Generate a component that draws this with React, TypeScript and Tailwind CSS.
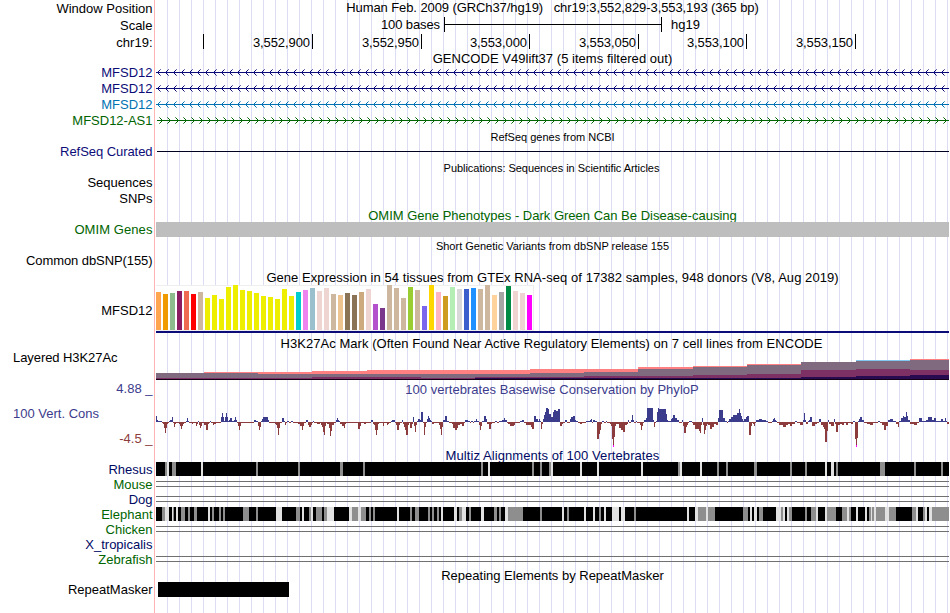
import type { ReactNode } from "react";

type Span = [number, number];

const TRACK_X = 156;

const gtex: [number, string][] = [
  [38, "#ffa54f"], [36, "#ee9a00"], [37, "#8fbc8f"], [39, "#8b1c62"], [39, "#ee6a50"], [36, "#ff0000"], [38, "#cdb79e"],
  [32, "#eeee00"], [35, "#eeee00"], [31, "#eeee00"], [43, "#eeee00"], [45, "#eeee00"], [40, "#eeee00"], [39, "#eeee00"],
  [37, "#eeee00"], [34, "#eeee00"], [33, "#eeee00"], [31, "#eeee00"], [41, "#eeee00"], [34, "#eeee00"], [38, "#00cdcd"],
  [40, "#ee82ee"], [42, "#9ac0cd"], [39, "#eed5d2"], [42, "#eed5d2"], [36, "#cdb79e"], [35, "#eec591"], [37, "#8b7355"],
  [35, "#8b7355"], [38, "#cdaa7d"], [41, "#eed5d2"], [26, "#b452cd"], [22, "#7a378b"], [45, "#cdb79e"], [42, "#cdb79e"],
  [32, "#cdb79e"], [43, "#9acd32"], [40, "#cdb79e"], [24, "#7a67ee"], [45, "#ffd700"], [38, "#ffb6c1"], [34, "#cd9b1d"],
  [43, "#b4eeb4"], [41, "#d9d9d9"], [41, "#3a5fcd"], [42, "#1e90ff"], [41, "#cdb79e"], [45, "#cdb79e"], [35, "#ffd39b"],
  [38, "#a6a6a6"], [44, "#008b45"], [39, "#eed5d2"], [37, "#eed5d2"], [35, "#ff00ff"],
];

// Segment start, then the top edge of each layer: outline, grey, purple, navy.
const h3k27: [number, number, string, number, number, number][] = [
  [156, 373, "#ff8080", 373, 378, 379],
  [204, 372, "#ff8080", 373, 378, 379],
  [258, 372, "#ff8080", 374, 378, 379],
  [312, 371, "#ff8080", 374, 377, 379],
  [367, 370, "#ff8080", 374, 377, 379],
  [421, 370, "#ff8080", 374, 378, 379],
  [475, 370, "#ff8080", 374, 377, 378],
  [530, 369, "#ff8080", 373, 377, 378],
  [584, 369, "#ff8080", 372, 376, 378],
  [638, 367, "#ff8080", 369, 376, 378],
  [693, 366, "#ff8080", 367, 375, 378],
  [747, 364, "#ff8080", 365, 374, 378],
  [801, 362, "#ff8080", 362, 370, 377],
  [856, 360, "#80c8f0", 361, 369, 376],
  [910, 359, "#ff8080", 360, 370, 375],
];

// Signed steps: each height holds from its x to the next one.
const phylop: Span[] = [
  [156, 6], [157, 2], [158, 1], [162, -1], [163, -2], [164, -6], [165, -11], [166, -6], [167, -2], [168, -1], [169, 1], [170, 2], [172, 5], [173, -1], [174, -5], [175, -2], [176, -1], [179, -2], [180, -4], [181, -7], [182, -4], [183, -2], [184, -1], [186, 1], [187, 4], [188, 1], [189, -1], [192, -2], [193, -1], [196, -4], [197, -2], [198, 1], [199, -3], [200, -6], [201, -4], [202, -1], [204, -3], [206, -8], [208, -2], [209, -1], [210, 1], [211, -1], [213, -3], [214, -2], [216, -1], [221, 5], [222, 9], [223, 5], [224, 1], [225, 5], [226, 9], [227, 5], [228, 1], [229, 2], [230, 4], [232, 1], [234, 2], [235, 5], [236, 2], [237, -1], [238, -4], [239, -8], [240, -4], [241, -1], [254, 2], [256, 1], [258, -4], [259, -8], [260, -5], [261, 1], [262, 3], [263, 5], [268, 2], [269, -1], [275, -2], [276, -3], [277, -6], [278, -13], [279, -6], [280, -1], [282, 4], [284, 1], [285, -3], [286, -1], [287, 1], [289, -1], [291, 1], [293, -1], [298, -2], [300, -4], [302, -8], [303, -4], [304, -1], [306, 2], [308, -3], [309, -5], [311, -3], [312, -1], [313, 1], [314, -1], [317, -2], [320, -1], [321, -3], [322, -5], [323, -10], [324, -13], [325, -4], [326, -1], [327, -2], [329, -6], [330, -14], [331, -9], [332, -3], [334, -1], [336, 2], [337, 4], [338, 2], [339, 1], [340, -2], [342, -4], [344, -6], [345, -2], [346, -1], [358, -7], [360, -4], [361, -1], [364, -2], [366, -1], [371, 2], [373, -2], [374, -3], [375, -8], [376, -13], [377, -8], [378, -2], [379, -1], [383, -4], [384, -1], [387, -3], [388, -2], [389, -1], [391, 1], [392, 2], [395, -1], [396, -3], [397, -8], [399, -3], [400, -1], [402, 2], [403, -2], [404, -5], [405, -8], [406, -13], [408, -3], [409, -1], [410, -6], [412, -2], [413, 5], [414, -4], [415, -10], [416, -3], [417, 1], [418, 3], [420, 2], [421, 10], [423, -1], [424, -13], [425, -5], [426, -1], [427, 3], [428, 6], [429, 4], [430, 2], [431, 1], [432, -2], [434, -1], [439, -3], [440, -7], [441, -13], [442, -5], [443, 2], [445, 6], [447, 1], [449, -1], [452, -2], [453, -6], [455, -8], [457, -6], [458, -3], [460, -2], [462, -4], [464, -1], [465, 2], [468, 1], [470, -1], [471, 1], [473, -1], [474, 1], [476, 3], [477, 1], [479, -3], [480, -8], [481, -4], [482, 1], [484, 6], [486, 3], [487, -2], [489, -7], [491, -2], [492, -1], [495, 1], [497, -1], [499, 1], [502, 2], [504, 4], [505, 2], [507, -1], [508, -2], [510, -4], [514, -3], [515, -1], [520, 1], [522, 2], [524, -1], [526, -3], [531, -5], [532, -7], [534, 6], [536, 3], [538, 1], [539, 3], [540, 1], [541, -7], [542, -2], [543, 3], [544, 7], [545, 10], [546, 14], [548, 13], [549, 8], [551, 5], [553, 10], [554, 12], [556, 11], [558, 13], [560, -4], [562, -2], [563, -1], [565, 2], [567, -1], [570, 3], [571, 5], [573, 6], [575, 2], [576, 1], [578, -1], [580, -2], [582, -1], [586, 1], [590, 2], [591, 3], [592, -1], [593, 2], [595, 1], [597, -17], [599, -12], [600, -8], [601, -2], [602, 1], [604, -1], [606, 1], [607, -1], [610, -2], [611, -4], [612, -17], [613, -25], [614, -15], [615, -4], [616, -2], [619, -6], [621, -8], [623, -10], [625, -3], [627, -2], [628, 2], [629, -1], [631, 2], [632, 7], [633, 2], [634, -1], [636, 1], [637, -1], [640, -3], [641, -8], [642, -4], [643, -1], [644, 2], [646, 4], [647, 14], [653, 2], [654, -5], [655, -1], [656, 1], [657, 10], [658, 14], [659, 13], [666, 8], [667, 2], [668, 1], [671, 3], [672, 4], [673, 7], [675, 4], [677, 2], [679, -1], [682, 2], [683, -4], [684, -11], [686, -5], [687, -3], [688, -1], [689, 1], [692, -1], [693, -3], [695, -7], [699, -9], [700, -11], [701, -3], [702, 4], [703, -3], [704, -12], [705, -8], [706, -4], [707, -2], [708, -3], [710, -7], [712, -5], [714, -2], [716, -3], [718, 4], [719, 12], [723, 4], [725, 1], [727, -1], [728, 1], [729, 3], [731, 5], [733, 7], [737, 9], [739, 13], [740, 9], [741, 6], [742, 3], [743, 1], [744, 3], [746, 5], [747, 6], [749, -13], [751, -4], [752, -1], [753, -2], [754, -4], [755, -1], [756, 2], [759, 3], [762, 2], [766, 1], [768, -1], [772, 1], [773, 3], [774, 4], [775, 2], [776, 1], [777, -1], [779, -3], [783, -5], [786, -3], [788, -2], [790, -4], [792, -2], [795, 1], [797, -1], [800, -3], [803, 2], [804, 9], [805, 2], [806, -2], [808, 1], [809, 2], [810, 5], [812, -4], [815, -2], [817, -1], [819, 3], [821, -3], [823, -5], [824, -7], [825, -20], [827, -9], [828, 2], [829, -2], [831, -4], [834, 3], [835, -2], [836, -10], [838, -3], [840, -2], [842, -3], [844, -1], [846, -3], [848, -1], [851, -2], [853, 1], [855, -17], [856, -25], [857, -16], [858, 1], [859, 3], [860, 5], [862, 2], [864, -1], [867, -2], [870, -3], [873, -1], [878, 1], [880, -1], [882, -3], [884, -8], [886, -4], [888, 2], [890, 3], [893, 1], [896, -2], [898, -5], [899, 1], [901, 4], [903, 6], [904, 5], [906, 10], [907, 6], [908, 2], [910, -2], [914, -3], [917, -1], [919, 4], [922, 1], [926, 2], [928, 5], [932, 2], [934, 4], [936, 1], [941, 3], [943, 1], [945, 4], [946, 1], [947, -2], [949, 0],
];

const rhesusLight: Span[] = [[167, 169], [201, 203], [488, 490], [551, 553], [580, 582], [597, 599], [641, 643], [680, 682], [700, 702], [825, 827], [831, 834]];
const rhesusGrey: Span[] = [[165, 167], [172, 176], [256, 258], [298, 300], [340, 343], [363, 365], [481, 483], [532, 534], [540, 542], [549, 551], [678, 680], [717, 719], [726, 728], [754, 757], [790, 792], [805, 807], [836, 838], [880, 885], [914, 916], [941, 943]];
const elephantLight: Span[] = [[165, 169], [172, 173], [176, 178], [208, 210], [276, 282], [302, 304], [311, 313], [327, 334], [349, 352], [358, 361], [397, 399], [441, 443], [454, 457], [462, 466], [481, 484], [505, 508], [562, 564], [584, 586], [593, 595], [604, 606], [612, 619], [621, 625], [687, 689], [695, 698], [706, 708], [750, 752], [754, 757], [776, 781], [783, 785], [787, 789], [816, 818], [825, 827], [847, 849], [856, 858], [865, 867], [871, 872], [874, 876], [885, 889], [916, 918], [925, 927], [929, 932]];
const elephantGrey: Span[] = [[162, 165], [173, 174], [181, 185], [188, 190], [194, 197], [212, 214], [219, 221], [223, 225], [243, 249], [256, 258], [296, 300], [309, 311], [316, 322], [324, 327], [352, 358], [361, 366], [369, 371], [373, 375], [410, 412], [415, 419], [428, 430], [432, 434], [437, 439], [459, 462], [469, 471], [494, 497], [499, 501], [508, 523], [540, 542], [567, 569], [599, 601], [634, 636], [698, 706], [708, 715], [743, 748], [759, 763], [781, 783], [789, 792], [805, 807], [811, 816], [827, 836], [842, 847], [849, 851], [869, 871], [872, 874], [876, 885], [889, 896], [912, 916], [923, 925], [932, 949]];

function Row({ size, label, labelClass = "", children }: { size: string; label?: ReactNode; labelClass?: string; children?: ReactNode }) {
  return (
    <div className={`flex shrink-0 ${size}`}>
      <div className={`w-[156px] shrink-0 pr-[3.5px] text-right ${labelClass}`}>{label}</div>
      <div className="w-[793px] shrink-0">{children}</div>
    </div>
  );
}

function Title({ children, className = "" }: { children: ReactNode; className?: string }) {
  return <div className={`text-center ${className}`}>{children}</div>;
}

// Track drawing in page coordinates, starting at the given top edge.
function Canvas({ top, height, children }: { top: number; height: number; children: ReactNode }) {
  return (
    <svg className="block" width={793} height={height} viewBox={`${TRACK_X} ${top} 793 ${height}`} shapeRendering="crispEdges">
      {children}
    </svg>
  );
}

function Gene({ color, forward = false }: { color: string; forward?: boolean }) {
  const marks: ReactNode[] = [];
  for (let i = 0; i < 99; i++) {
    const tip = (forward ? 162 : 157) + i * 8;
    const dir = forward ? -1 : 1;
    for (let k = 1; k <= 3; k++) {
      marks.push(<rect key={`${i}-${k}`} x={tip + dir * k} y={8 - k} width={1} height={1} opacity={k === 3 ? 0.6 : 1} />);
      marks.push(<rect key={`${i}+${k}`} x={tip + dir * k} y={8 + k} width={1} height={1} opacity={k === 3 ? 0.6 : 1} />);
    }
  }
  return (
    <Canvas top={0} height={16}>
      <g fill={color}>
        <rect x={forward ? 157 : 156} y={8} width={793} height={1} />
        {marks}
      </g>
    </Canvas>
  );
}

function Alignment({ light, grey }: { light: Span[]; grey: Span[] }) {
  return (
    <Canvas top={0} height={14}>
      <rect x={156} width={793} height={14} fill="#000" />
      {light.map(([a, b]) => <rect key={a} x={a} width={b - a} height={14} fill="#e1e1e1" />)}
      {grey.map(([a, b]) => <rect key={a} x={a} width={b - a} height={14} fill="#8e8e8e" />)}
    </Canvas>
  );
}

function DoubleLine() {
  return <div className="mt-[4px] h-[6px] border-y border-[#707070]" />;
}

const ticks: [string, string][] = [
  ["w-[48px]", ""], ["w-[109px]", "3,552,900"], ["w-[109px]", "3,552,950"], ["w-[108px]", "3,553,000"],
  ["w-[109px]", "3,553,050"], ["w-[108px]", "3,553,100"], ["w-[109px]", "3,553,150"],
];

export default function App() {
  return (
    <div className="h-[613px] w-[950px] overflow-hidden bg-white bg-[linear-gradient(to_right,#ffb4b4_1px,transparent_1px),repeating-linear-gradient(to_right,#dcdcf5_0,#dcdcf5_1px,transparent_1px,transparent_12px)] bg-[size:1px_100%,783px_100%] bg-[position:154px_0,167px_0] bg-no-repeat font-['Liberation_Sans',Arial,sans-serif] text-[13px] leading-[15px] whitespace-pre text-black">
      <Row size="h-[16px]" label="Window Position" labelClass="pt-px">
        <Title className="tracking-[-0.09px]">{"Human Feb. 2009 (GRCh37/hg19)   chr19:3,552,829-3,553,193 (365 bp)"}</Title>
      </Row>
      <Row size="h-[17px]" label="Scale" labelClass="pt-[2px]">
        <div className="flex pt-px">
          <div className="w-[288px] pr-[4px] text-right tracking-[-0.1px]">100 bases</div>
          <div className="flex h-[15px] w-[218px] border-x border-black">
            <div className="mt-[7px] h-px w-full bg-black" />
          </div>
          <div className="pl-[9px]">hg19</div>
        </div>
      </Row>
      <Row size="h-[17px]" label="chr19:" labelClass="pt-[2px]">
        <div className="flex pt-px">
          {ticks.map(([w, text]) => (
            <div key={w + text} className={`h-[15px] shrink-0 border-r border-black pt-px pr-[2px] text-right tracking-[-0.08px] ${w}`}>{text}</div>
          ))}
        </div>
      </Row>
      <Row size="h-[14px]"><Title className="pt-px tracking-[0.03px]">GENCODE V49lift37 (5 items filtered out)</Title></Row>
      <Row size="h-[16px]" label="MFSD12" labelClass="pt-px text-[#0c0c78]"><Gene color="#0c0c78" /></Row>
      <Row size="h-[16px]" label="MFSD12" labelClass="pt-px text-[#0c0c78]"><Gene color="#0c0c78" /></Row>
      <Row size="h-[16px]" label="MFSD12" labelClass="pt-px text-[#0072b2]"><Gene color="#0072b2" /></Row>
      <Row size="h-[16px]" label="MFSD12-AS1" labelClass="pt-px text-[#006400]"><Gene color="#006400" forward /></Row>
      <Row size="h-[17px]"><Title className="pt-[2px] text-[11px]">RefSeq genes from NCBI</Title></Row>
      <Row size="h-[14px]" label="RefSeq Curated" labelClass="-mt-px tracking-[-0.06px] text-[#0c0c78]"><div className="mt-[6px] ml-px h-px bg-[#000020]" /></Row>
      <Row size="h-[16px]"><Title className="pt-[2px] pr-[2px] text-[11px] tracking-[-0.04px]">Publications: Sequences in Scientific Articles</Title></Row>
      <Row size="h-[16px]" label="Sequences" />
      <Row size="h-[16px]" label="SNPs" />
      <Row size="h-[15px]"><Title className="pt-px text-[#006400]">OMIM Gene Phenotypes - Dark Green Can Be Disease-causing</Title></Row>
      <Row size="h-[15px]" label="OMIM Genes" labelClass="tracking-[0.08px] text-[#006400]"><div className="h-[15px] bg-[#bebebe]" /></Row>
      <Row size="h-[16px]"><Title className="pt-[2px] text-[11px]">Short Genetic Variants from dbSNP release 155</Title></Row>
      <Row size="h-[16px]" label="Common dbSNP(155)" labelClass="tracking-[-0.08px]" />
      <Row size="h-[16px]"><Title className="pt-px tracking-[0.055px]">Gene Expression in 54 tissues from GTEx RNA-seq of 17382 samples, 948 donors (V8, Aug 2019)</Title></Row>
      <Row size="h-[48px]" label="MFSD12" labelClass="pt-[18px]">
        <div className="flex h-[46px] w-[378px] items-end gap-[2px] border border-l-0 border-[#eeeeee] bg-white">
          {gtex.map(([h, color], i) => (
            <div key={i} className="w-[5px] shrink-0" style={{ height: h, background: color }} />
          ))}
        </div>
        <div className="h-[2px] bg-[#0c0c78]" />
      </Row>
      <Row size="h-[17px]"><Title className="pt-[3px] pr-[2px] tracking-[0.053px]">H3K27Ac Mark (Often Found Near Active Regulatory Elements) on 7 cell lines from ENCODE</Title></Row>
      <Row size="h-[30px]" label="Layered H3K27Ac" labelClass="pl-[13px] text-left! tracking-[-0.07px]">
        <Canvas top={350} height={30}>
          {h3k27.map(([x, top, edge, grey, purple, navy], i) => {
            const w = (h3k27[i + 1]?.[0] ?? 949) - x;
            return (
              <g key={x}>
                <rect x={x} y={top} width={w} height={380 - top} fill={edge} />
                <rect x={x} y={grey} width={w} height={380 - grey} fill="#806a80" />
                <rect x={x} y={purple} width={w} height={380 - purple} fill="#7d3064" />
                <rect x={x} y={navy} width={w} height={380 - navy} fill="#280a50" />
                <rect x={x} y={379} width={w} height={1} fill="#140014" />
              </g>
            );
          })}
        </Canvas>
      </Row>
      <Row size="h-[26px]" label="4.88 _" labelClass="pt-px text-[#3c3c8c]"><Title className="pt-[2px] pr-[1px] tracking-[0.035px] text-[#3c3c8c]">100 vertebrates Basewise Conservation by PhyloP</Title></Row>
      <Row
        size="h-[41px]"
        label={<><div className="pl-[13px] text-left text-[#3c3c8c]">100 Vert. Cons</div><div className="pt-[10px] text-[#8c3c3c]">-4.5 _</div></>}
      >
        <Canvas top={406} height={41}>
          {phylop.slice(0, -1).map(([x, v], i) => (
            <rect key={x} x={x} y={v > 0 ? 422 - v : 422} width={phylop[i + 1][0] - x} height={Math.abs(v)} fill={v > 0 ? "#3c3c8c" : "#8c3c3c"} />
          ))}
          <rect x={613} y={445} width={1} height={2} fill="#ff00ff" />
          <rect x={856} y={445} width={1} height={2} fill="#ff00ff" />
        </Canvas>
      </Row>
      <Row size="h-[15px]"><Title className="pt-px tracking-[0.08px] text-[#000a64]">Multiz Alignments of 100 Vertebrates</Title></Row>
      <Row size="h-[15px]" label="Rhesus" labelClass="text-[#000a64]"><Alignment light={rhesusLight} grey={rhesusGrey} /></Row>
      <Row size="h-[15px]" label="Mouse" labelClass="text-[#006400]"><DoubleLine /></Row>
      <Row size="h-[15px]" label="Dog" labelClass="text-[#000a64]"><DoubleLine /></Row>
      <Row size="h-[15px]" label="Elephant" labelClass="text-[#006400]"><Alignment light={elephantLight} grey={elephantGrey} /></Row>
      <Row size="h-[15px]" label="Chicken" labelClass="text-[#006400]"><DoubleLine /></Row>
      <Row size="h-[15px]" label="X_tropicalis" labelClass="text-[#000a64]" />
      <Row size="h-[15px]" label="Zebrafish" labelClass="text-[#006400]"><DoubleLine /></Row>
      <Row size="h-[15px]"><Title className="pt-px">Repeating Elements by RepeatMasker</Title></Row>
      <Row size="h-[15px]" label="RepeatMasker"><div className="ml-[2px] h-[15px] w-[131px] bg-black" /></Row>
    </div>
  );
}
